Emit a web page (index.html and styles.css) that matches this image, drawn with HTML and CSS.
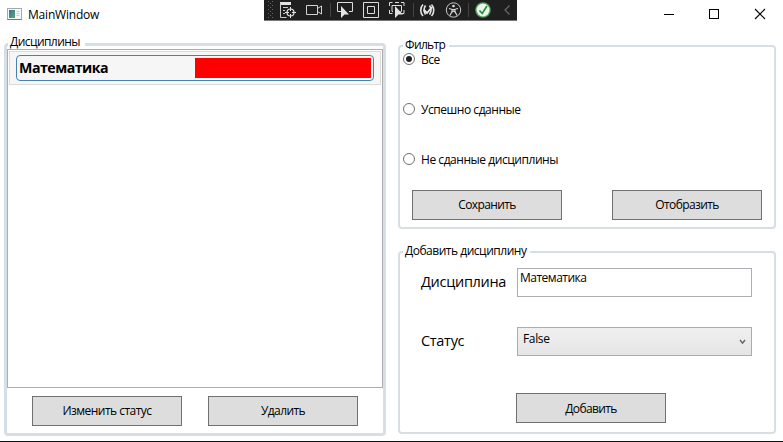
FILE: index.html
```
<!DOCTYPE html>
<html lang="ru">
<head>
<meta charset="utf-8">
<title>MainWindow</title>
<link rel="stylesheet" href="styles.css">
</head>
<body>
<div class="window">
  <header class="titlebar">
    <svg class="app-icon" width="15" height="12" viewBox="0 0 15 12"><rect x=".5" y=".5" width="14" height="11" fill="#f7f8f8" stroke="#a5aaad"/><path d="M.5 11.5h14" stroke="#777"/><defs><linearGradient id="g" x2="1" y2="1"><stop stop-color="#3d6e9c"/><stop offset="1" stop-color="#55ad78"/></linearGradient></defs><rect x="2" y="2" width="6" height="8" fill="url(#g)"/><path d="M9.500 3.500h3M9.500 5.500h3M9.500 7.500h3" stroke="#c9cccd"/></svg>
    <span class="title">MainWindow</span>
    <svg class="controls" width="104" height="12" viewBox="0 0 104 12" fill="none" stroke="#000"><path d="M1 6.500h10"/><rect x="46.500" y="1.500" width="9" height="9"/><path d="M92 1l10 10M102 1L92 11" stroke-width="1.100"/></svg>
  </header>
  <div class="debugbar">
    <svg width="253" height="20" viewBox="0 0 253 20" fill="none">
      <g stroke="#666" stroke-dasharray="1 3"><path d="M4.500 1v18M8.500 1v18"/><path d="M6.500 3v16"/></g>
      <path d="M16 3.500h11" stroke="#e4e4e4" stroke-width="3"/>
      <path d="M16.500 3v14.500h6M19 7.500h5M19 10.500h2M19 13.500h2" stroke="#c8c8c8"/>
      <circle cx="26.500" cy="12.500" r="3.500" stroke="#e4e4e4" stroke-width="1.200"/><path d="M26.500 7v4M26.500 14v4M21 12.500h4M28 12.500h4" stroke="#e4e4e4"/>
      <path d="M42.500 5.500h11v9h-11zM53.500 8.500l4-2.500v8l-4-2.500" stroke="#d2d2d2"/>
      <path d="M66.500 3v14M149.500 3v14M204.500 3v14" stroke="#444"/>
      <path d="M77 11.500h-3.500v-9h15v9H85" stroke="#ddd"/><path d="M77 6v12l3.500-3.500H85z" fill="#e4e4e4"/>
      <path d="M99.500 2.500h15v15h-15zM103.500 6.500h7v7h-7z" stroke="#ddd"/>
      <path d="M125.500 6V2.500h3M137 2.500h3V6M125.500 10v3.500h3M138 13.500h2V10M131 2.500h4M129 11.500h-1v-6h9.500v6h-1" stroke="#ddd"/><path d="M131 6v12l3.500-3.500h4.500z" fill="#e4e4e4"/>
      <path d="M159 4.500c-3 3-3 8.500 0 11.500M161.500 5.500c-2 3-2 6 0 9M167.500 4.500c3 3 3 8.500 0 11.500M165.500 5.500c2 3 2 6 0 9" stroke="#e4e4e4" stroke-width="1.600"/><path d="M160 10l3 3 5-6" stroke="#eee" stroke-width="1.800"/>
      <circle cx="189.500" cy="10" r="7.200" stroke="#c8c8c8"/><circle cx="189.500" cy="6" r="1.300" fill="#ddd"/><path d="M185 8.500l3 .8v2.200l-2 4M194 8.500l-3 .8v2.200l2 4M188 9.500h3M188 12l1.500-1 1.500 1" stroke="#ddd" stroke-width="1.100"/>
      <circle cx="219" cy="10" r="7.800" fill="#4a9c56"/><circle cx="219" cy="10" r="6.500" fill="#e9f5e9"/><path d="M215.500 10.500l2.700 3 4.800-7.500" stroke="#2b873b" stroke-width="1.600"/>
      <path d="M245.500 5.500L241 10l4.500 4.500" stroke="#686868" stroke-width="1.200"/>
    </svg>
  </div>
  <main class="content">
    <section class="group disciplines">
      <h2 class="legend l1">Дисциплины</h2>
      <div class="list"><div class="item"><div class="card"><span class="name">Математика</span><span class="status"></span></div></div></div>
      <div class="actions left-actions"><button class="t-change">Изменить статус</button><button class="t-delete">Удалить</button></div>
    </section>
    <div class="side">
      <section class="group filter">
        <h2 class="legend l2">Фильтр</h2>
        <div class="radios">
          <label class="radio"><i class="dot checked"></i><span class="r1">Все</span></label>
          <label class="radio"><i class="dot"></i><span class="r2">Успешно сданные</span></label>
          <label class="radio"><i class="dot"></i><span class="r3">Не сданные дисциплины</span></label>
        </div>
        <div class="actions filter-actions"><button class="t-save">Сохранить</button><button class="t-show">Отобразить</button></div>
      </section>
      <section class="group add">
        <h2 class="legend l3">Добавить дисциплину</h2>
        <div class="row"><span class="label b1">Дисциплина</span><div class="field"><span class="value">Математика</span></div></div>
        <div class="row"><span class="label b2">Статус</span><div class="field combo"><span class="choice">False</span><svg width="7" height="6" viewBox="0 0 7 6"><path d="M1 1l2.500 3.200L6 1" fill="none" stroke="#606060" stroke-width="1.300"/></svg></div></div>
        <button class="t-add">Добавить</button>
      </section>
    </div>
  </main>
</div>
</body>
</html>
```
FILE: styles.css
```
* { box-sizing: border-box; }
body { margin: 0; background: #fff; color: #000; font: 12px/16px "Open Sans", "Noto Sans", sans-serif; }
.window { position: relative; width: 783px; height: 442px; overflow: hidden; border-bottom: 1px solid #111; }
.titlebar { display: flex; align-items: center; height: 28px; padding: 0 16px 0 7px; }
.app-icon { margin-right: 6px; }
.controls { margin-left: auto; }
.title { letter-spacing: -0.2px; padding-top: 1px; }
.debugbar { position: absolute; left: 264px; top: 0; width: 253px; height: 21px; background: #1f1f1f; border-bottom: 1px solid #777; }
.debugbar svg { display: block; }
.content { display: flex; align-items: flex-start; gap: 12px; padding: 15px 7px 0 4px; }
.group { position: relative; border: 2px solid #d5dfe5; border-radius: 4px; }
.legend { position: absolute; margin: 0; padding: 0 4px 0 2px; background: #fff; font-size: 12px; font-weight: 400; line-height: 16px; white-space: nowrap; }
.disciplines { width: 382px; height: 393px; border-width: 3px; padding-top: 3px; }
.l1 { left: 1px; top: -12px; height: 14px; padding-right: 5px; letter-spacing: -0.55px; }
.list { height: 339px; border: 1px solid #abadb3; padding: 1px; }
.item { height: 34px; border: 1px solid #dadada; background: #f6f6f6; padding: 3px 6px; }
.card { display: flex; align-items: center; justify-content: space-between; height: 26px; border: 1px solid #4682b4; border-radius: 4px; padding: 0 2px; }
.name { font-size: 14.2px; font-weight: 700; line-height: 20px; letter-spacing: -0.5px; }
.status { width: 176px; height: 20px; background: #f00; }
button { width: 150px; height: 30px; border: 1px solid #707070; border-radius: 0; background: #ddd; color: #000; padding: 0; font: inherit; letter-spacing: -0.6px; }
.t-change { letter-spacing: -0.52px; }
.actions { display: flex; }
.left-actions { gap: 26px; padding: 8px 0 0 25px; }
.side { display: flex; flex-direction: column; gap: 22px; width: 378px; padding-top: 2px; }
.filter { height: 184px; padding: 6px 0 0 3px; }
.l2, .l3 { left: 3px; top: -10px; height: 14px; }
.l2 { line-height: 15px; letter-spacing: -0.65px; }
.l3 { letter-spacing: -0.48px; }
.radios { display: flex; flex-direction: column; gap: 38px; }
.radio { display: flex; align-items: center; gap: 6px; height: 12px; }
.radio span { padding-top: 2px; letter-spacing: -0.45px; }
.dot { display: grid; place-items: center; width: 12px; height: 12px; border: 1px solid #707070; border-radius: 50%; }
.checked::after { content: ""; width: 6px; height: 6px; border-radius: 50%; background: #212121; }
.filter-actions { gap: 50px; padding: 25px 0 0 9px; }
.add { height: 183px; padding: 15px 0 0 21px; }
.row { display: flex; height: 29px; margin-bottom: 30px; }
.label { width: 96px; font-size: 14.5px; line-height: 27px; white-space: nowrap; letter-spacing: -0.3px; }
.field { width: 235px; height: 29px; border: 1px solid #abadb3; padding: 1px 2px; }
.value { letter-spacing: -0.5px; }
.combo { display: flex; align-items: center; justify-content: space-between; padding: 0 5px; border-color: #acacac; background: linear-gradient(#f0f0f0, #e5e5e5); }
.choice { margin-top: -5px; letter-spacing: -0.35px; }
.t-add { display: block; margin: 37px 0 0 95px; padding-top: 2px; }
```
